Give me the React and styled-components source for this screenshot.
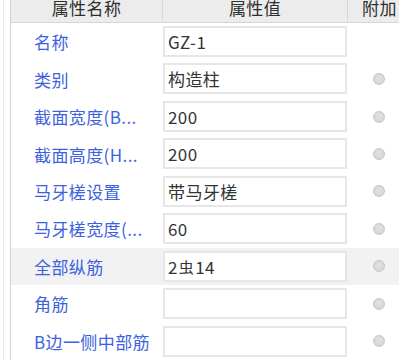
import React from "react";
import styled, { createGlobalStyle } from "styled-components";

const Global = createGlobalStyle`
  html, body { margin: 0; padding: 0; background: #fff; }
  body { width: 399px; height: 360px; overflow: hidden; font-family: "Noto Sans CJK SC", "Noto Sans", sans-serif; }
`;

const Page = styled.div`
  display: flex;
  width: 399px;
  height: 360px;
  overflow: hidden;
  background: #fff;
`;

const Gutter = styled.div`
  flex: none;
  width: 6px;
  margin-left: 3px;
  border-left: 1px solid #e8e8e8;
`;

const Table = styled.div`
  flex: none;
  width: 420px;
  border-left: 1px solid #d2d2d2;
  display: flex;
  flex-direction: column;
`;

const cols = "152px 185px 83px";

const Header = styled.div`
  display: grid;
  grid-template-columns: ${cols};
  height: 22px;
  background: #ececec;
  border-bottom: 1px solid #d6d6d6;
`;

const HeadCell = styled.div`
  display: flex;
  align-items: center;
  justify-content: ${(p) => (p.$left ? "flex-start" : "center")};
  padding-bottom: 7px;
  padding-left: ${(p) => (p.$left ? "14px" : "0")};
  box-sizing: border-box;
  border-right: ${(p) => (p.$last ? "none" : "1px solid #d8d8d8")};
  font-size: 17px;
  letter-spacing: 0.4px;
  color: #2e2e2e;
  white-space: nowrap;
  overflow: hidden;
`;

const Row = styled.div`
  display: grid;
  grid-template-columns: ${cols};
  height: 37.5px;
  background: ${(p) => (p.$active ? "#f2f2f2" : "#fff")};
`;

const Label = styled.div`
  display: flex;
  align-items: center;
  padding-left: 23px;
  font-size: 17px;
  letter-spacing: 0.4px;
  color: #3d62e0;
  white-space: nowrap;
  overflow: hidden;
`;

const ValueCell = styled.div`
  padding-top: 3px;
  padding-right: 1px;
`;

const ValueBox = styled.div`
  box-sizing: border-box;
  height: 31px;
  border: 2px solid #e6e6e6;
  background: #fff;
  display: flex;
  align-items: center;
  padding-left: 3px;
  font-size: 17px;
  letter-spacing: 0.4px;
  color: #333;
  white-space: nowrap;
  overflow: hidden;
`;

const Sym = styled.span`
  font-size: 15px;
  margin: 0 1px;
`;

const ExtraCell = styled.div`
  display: flex;
  align-items: center;
  padding-left: 25px;
`;

const Radio = styled.span`
  width: 10px;
  height: 10px;
  border-radius: 50%;
  background: radial-gradient(circle at 50% 40%, #e2e2e2, #d2d2d2);
  border: 1px solid #c6c6c6;
`;

const rows = [
  { label: "名称", value: "GZ-1", radio: false },
  { label: "类别", value: "构造柱", radio: true },
  { label: "截面宽度(B...", value: "200", radio: true },
  { label: "截面高度(H...", value: "200", radio: true },
  { label: "马牙槎设置", value: "带马牙槎", radio: true },
  { label: "马牙槎宽度(...", value: "60", radio: true },
  { label: "全部纵筋", value: "rebar", radio: true, active: true },
  { label: "角筋", value: "", radio: true },
  { label: "B边一侧中部筋", value: "", radio: true },
];

export default function App() {
  return (
    <Page>
      <Global />
      <Gutter />
      <Table>
        <Header>
          <HeadCell>属性名称</HeadCell>
          <HeadCell>属性值</HeadCell>
          <HeadCell $left $last>附加</HeadCell>
        </Header>
        {rows.map((r) => (
          <Row key={r.label} $active={r.active}>
            <Label>{r.label}</Label>
            <ValueCell>
              <ValueBox>
                {r.value === "rebar" ? (
                  <>
                    2<Sym>虫</Sym>14
                  </>
                ) : (
                  r.value
                )}
              </ValueBox>
            </ValueCell>
            <ExtraCell>{r.radio && <Radio />}</ExtraCell>
          </Row>
        ))}
      </Table>
    </Page>
  );
}
